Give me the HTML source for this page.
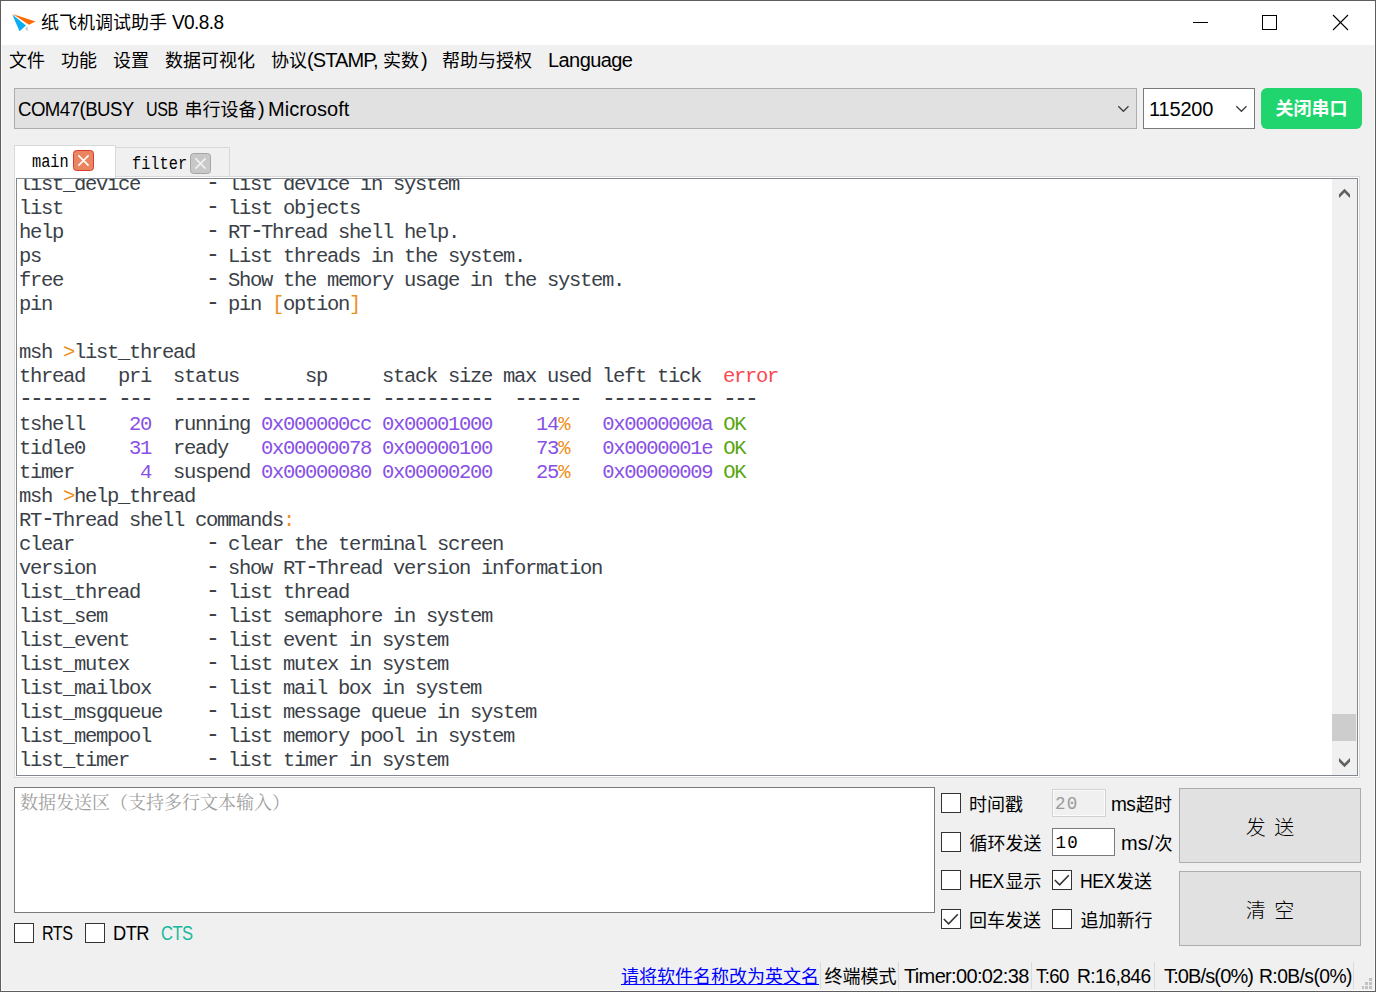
<!DOCTYPE html>
<html lang="zh-CN">
<head>
<meta charset="utf-8">
<title>纸飞机调试助手 V0.8.8</title>
<style>
html,body{margin:0;padding:0;}
body{width:1376px;height:992px;overflow:hidden;background:#f0f0f0;position:relative;
 font-family:"Liberation Sans","Noto Sans CJK SC",sans-serif;font-size:18px;color:#000;}
.abs{position:absolute;}
.t{position:absolute;white-space:pre;line-height:24px;height:24px;}
.c{font-size:18px;}
.l{font-size:20px;}
#frame{position:absolute;left:0;top:0;width:1374px;height:990px;border:1px solid #5e5e5e;pointer-events:none;z-index:50;}
#frame2{position:absolute;left:1px;top:45px;width:1372px;height:945px;border:1px solid #fbfbfb;border-top:none;pointer-events:none;z-index:49;}
#titlebar{position:absolute;left:1px;top:1px;width:1374px;height:44px;background:#fff;}
.combo{position:absolute;box-sizing:border-box;top:88px;height:41px;}
.cb{position:absolute;box-sizing:border-box;width:20px;height:20px;border:1px solid #333;background:#fff;}
.btn{position:absolute;box-sizing:border-box;background:#e1e1e1;border:1px solid #adadad;}
.sep{position:absolute;top:962px;width:1px;height:27px;background:#dadada;}
#term{position:absolute;left:16px;top:178px;width:1342px;height:598px;box-sizing:border-box;border:1px solid #828790;background:#fff;overflow:hidden;}
#term pre{position:absolute;left:2px;top:-6.5px;margin:0;font-family:"Liberation Mono",monospace;font-size:20.5px;letter-spacing:-1.302px;line-height:24px;color:#3b3f48;}
.d{font-size:23px;letter-spacing:-2.802px;position:relative;top:-1px;line-height:0;}
.o{color:#ee8f22;} .p{color:#8850e6;} .r{color:#f94a52;} .g{color:#58a512;}
.tab{font-family:"Liberation Mono",monospace;font-size:18px;transform:scaleX(0.85);transform-origin:0 0;}
.mono{font-family:"Liberation Mono",monospace;font-size:17.5px;letter-spacing:1.3px;}
.bt{font-family:"Liberation Sans","Noto Sans CJK SC",sans-serif;font-weight:300;font-size:20px;word-spacing:3px;}
</style>
</head>
<body>
<div id="titlebar"></div>
<!-- app icon -->
<svg class="abs" style="left:11px;top:13px" width="26" height="20" viewBox="0 0 26 20">
 <polygon points="1.7,1.1 24.5,8.6 17.9,11.7" fill="#ff6a00"/>
 <polygon points="1.3,1.4 15,12.5 8.5,18.2" fill="#0aaef0"/>
 <polygon points="16.6,13.2 16.9,18.4 14,15.6" fill="#c8c8c8"/>
</svg>
<div id="title"><span class="t c" id="title_c" style="left:41px;top:11px;">纸飞机调试助手</span><span class="t l" id="title_l" style="left:172px;top:10px;letter-spacing:-0.6px;transform:scaleX(0.951);transform-origin:0 0;">V0.8.8</span></div>
<!-- window controls -->
<svg class="abs" style="left:1180px;top:1px" width="194" height="44" viewBox="0 0 194 44" shape-rendering="crispEdges">
 <rect x="13" y="21" width="15" height="1" fill="#000"/>
 <rect x="82.5" y="14.5" width="14" height="14" fill="none" stroke="#000" stroke-width="1"/>
 <g shape-rendering="geometricPrecision" stroke="#000" stroke-width="1.1"><line x1="153" y1="14" x2="168" y2="29"/><line x1="168" y1="14" x2="153" y2="29"/></g>
</svg>
<!-- menu bar -->
<div id="menubar"><span class="t c" id="m1" style="left:9px;top:49px;">文件</span> <span class="t c" id="m2" style="left:61px;top:49px;">功能</span> <span class="t c" id="m3" style="left:113px;top:49px;">设置</span> <span class="t c" id="m4" style="left:165px;top:49px;">数据可视化</span> <span><span class="t c" id="m5a" style="left:271px;top:49px;">协议</span><span class="t l" id="m5b" style="left:307px;top:48px;letter-spacing:-0.91px;">(STAMP,</span> <span class="t c" id="m5c" style="left:383px;top:49px;">实数</span><span class="t l" id="m5d" style="left:421px;top:48px;">)</span></span> <span class="t c" id="m6" style="left:442px;top:49px;">帮助与授权</span> <span class="t l" id="m7" style="left:548px;top:48px;letter-spacing:-0.58px;">Language</span></div>
<!-- port combo -->
<div class="combo" style="left:14px;width:1123px;background:#e1e1e1;border:1px solid #adadad;"></div>
<div id="port"><span class="t l" id="p1" style="left:18px;top:97px;letter-spacing:-0.6px;transform:scaleX(0.933);transform-origin:0 0;">COM47(BUSY</span>  <span class="t l" id="p2" style="left:146px;top:97px;letter-spacing:-0.6px;transform:scaleX(0.805);transform-origin:0 0;">USB</span> <span class="t c" id="p3" style="left:184.5px;top:98px;">串行设备</span><span class="t l" id="p4" style="left:258px;top:97px;">)</span> <span class="t l" id="p5" style="left:268px;top:97px;letter-spacing:0.02px;">Microsoft</span></div>
<svg class="abs" style="left:1116px;top:104px" width="14" height="10" viewBox="0 0 14 10"><polyline points="2.3,2.2 7.4,7.3 12.5,2.2" fill="none" stroke="#3c3c3c" stroke-width="1.25"/></svg>
<!-- baud combo -->
<div class="combo" style="left:1143px;width:112px;background:#fff;border:1px solid #7a7a7a;"></div>
<span class="t l" id="baud" style="left:1149px;top:97px;letter-spacing:-0.16px;">115200</span>
<svg class="abs" style="left:1234px;top:104px" width="14" height="10" viewBox="0 0 14 10"><polyline points="2.3,2.2 7.4,7.3 12.5,2.2" fill="none" stroke="#3c3c3c" stroke-width="1.25"/></svg>
<!-- close port button -->
<div class="abs" style="left:1261px;top:88px;width:101px;height:41px;background:#20d56d;border-radius:6px;"></div>
<div class="t" id="closeport" style="left:1261px;top:97px;width:101px;text-align:center;color:#fff;font-weight:bold;">关闭串口</div>
<!-- tab pane frame -->
<div class="abs" style="left:14px;top:176px;width:1346px;height:602px;box-sizing:border-box;border:1px solid #d9d9d9;background:#fff;"></div>
<!-- tabs -->
<div class="abs" style="left:14px;top:145px;width:102px;height:34px;box-sizing:border-box;background:#fff;border:1px solid #d9d9d9;border-bottom:none;"></div>
<div class="abs" style="left:116px;top:147px;width:114px;height:30px;box-sizing:border-box;background:#f0f0f0;border:1px solid #d9d9d9;border-left:none;"></div>
<div class="abs" style="left:15px;top:146px;width:100px;height:32px;background:#fff;"></div>
<div class="t tab" id="tab1" style="left:31.5px;top:150px;">main</div>
<div class="abs" style="left:72.5px;top:150.3px;width:21px;height:21px;box-sizing:border-box;border:1.6px solid #dc3a2c;border-radius:3.5px;background:#e98560;"></div>
<svg class="abs" style="left:72.5px;top:150.3px" width="21" height="21" viewBox="0 0 21 21"><path d="M5.4 5.4 L15.6 15.6 M15.6 5.4 L5.4 15.6" stroke="#fff" stroke-width="1.5" fill="none"/></svg>
<div class="t tab" id="tab2" style="left:131.5px;top:152px;">filter</div>
<div class="abs" style="left:190.4px;top:152.5px;width:21px;height:21px;box-sizing:border-box;border:1.6px solid #a6a6a6;border-radius:3.5px;background:#c8c8c8;"></div>
<svg class="abs" style="left:190.4px;top:152.5px" width="21" height="21" viewBox="0 0 21 21"><path d="M5.4 5.4 L15.6 15.6 M15.6 5.4 L5.4 15.6" stroke="#f2f2f2" stroke-width="1.5" fill="none"/></svg>
<!-- terminal -->
<div id="term"><pre>list_device      <span class="d">-</span> list device in system
list             <span class="d">-</span> list objects
help             <span class="d">-</span> RT<span class="d">-</span>Thread shell help.
ps               <span class="d">-</span> List threads in the system.
free             <span class="d">-</span> Show the memory usage in the system.
pin              <span class="d">-</span> pin <span class="o">[</span>option<span class="o">]</span>

msh <span class="o">&gt;</span>list_thread
thread   pri  status      sp     stack size max used left tick  <span class="r">error</span>
<span class="d">-------- ---  ------- ---------- ----------  ------  ---------- ---</span>
tshell    <span class="p">20</span>  running <span class="p">0x000000cc</span> <span class="p">0x00001000</span>    <span class="p">14</span><span class="o">%</span>   <span class="p">0x0000000a</span> <span class="g">OK</span>
tidle0    <span class="p">31</span>  ready   <span class="p">0x00000078</span> <span class="p">0x00000100</span>    <span class="p">73</span><span class="o">%</span>   <span class="p">0x0000001e</span> <span class="g">OK</span>
timer      <span class="p">4</span>  suspend <span class="p">0x00000080</span> <span class="p">0x00000200</span>    <span class="p">25</span><span class="o">%</span>   <span class="p">0x00000009</span> <span class="g">OK</span>
msh <span class="o">&gt;</span>help_thread
RT<span class="d">-</span>Thread shell commands<span class="o">:</span>
clear            <span class="d">-</span> clear the terminal screen
version          <span class="d">-</span> show RT<span class="d">-</span>Thread version information
list_thread      <span class="d">-</span> list thread
list_sem         <span class="d">-</span> list semaphore in system
list_event       <span class="d">-</span> list event in system
list_mutex       <span class="d">-</span> list mutex in system
list_mailbox     <span class="d">-</span> list mail box in system
list_msgqueue    <span class="d">-</span> list message queue in system
list_mempool     <span class="d">-</span> list memory pool in system
list_timer       <span class="d">-</span> list timer in system</pre>
 <div class="abs" style="right:0;top:0;width:25px;height:596px;background:#f0f0f0;"></div>
 <div class="abs" style="right:1px;top:535px;width:24px;height:27px;background:#cdcdcd;"></div>
 <svg class="abs" style="left:1321px;top:9px" width="14" height="12" viewBox="0 0 14 12"><polygon points="6.5,0.8 12.1,6.4 11.9,10.1 6.5,4.6 1.1,10.1 0.9,6.4" fill="#606060"/></svg>
 <svg class="abs" style="left:1321px;top:577px" width="14" height="12" viewBox="0 0 14 12"><polygon points="6.5,11.2 12.1,5.6 11.9,1.9 6.5,7.4 1.1,1.9 0.9,5.6" fill="#606060"/></svg>
</div>
<!-- send area -->
<div class="abs" style="left:14px;top:787px;width:921px;height:126px;box-sizing:border-box;border:1px solid #7a7a7a;background:#fff;"></div>
<div class="t" id="ph" style="left:20px;top:791px;font-family:'Liberation Serif','Noto Serif CJK SC',serif;font-size:18px;color:#a0a0a0;">数据发送区（支持多行文本输入）</div>
<!-- RTS DTR CTS -->
<div class="cb" style="left:14px;top:923px;"></div><span class="t l" id="rts" style="left:42px;top:921px;letter-spacing:-0.6px;transform:scaleX(0.805);transform-origin:0 0;">RTS</span>
<div class="cb" style="left:85px;top:923px;"></div><span class="t l" id="dtr" style="left:113px;top:921px;letter-spacing:-0.6px;transform:scaleX(0.915);transform-origin:0 0;">DTR</span>
<span class="t l" id="cts" style="left:161px;top:921px;letter-spacing:-0.6px;transform:scaleX(0.829);transform-origin:0 0;color:#18b89c;">CTS</span>
<!-- options grid -->
<div class="cb" style="left:941px;top:793px;"></div><span class="t c" id="o1" style="left:969px;top:793px;">时间戳</span>
<div class="abs" style="left:1052px;top:789px;width:54px;height:28px;box-sizing:border-box;border:1px solid #d2d2d2;background:#f0f0f0;box-shadow:inset 0 0 0 1px #fbfbfb;"></div>
<div class="t mono" id="v1" style="left:1055px;top:792px;color:#9a9a9a;">20</div>
<span class="t l" id="u1a" style="left:1110.5px;top:792px;letter-spacing:-0.6px;transform:scaleX(0.953);transform-origin:0 0;">ms</span><span class="t c" id="u1b" style="left:1136px;top:793px;">超时</span>
<div class="cb" style="left:941px;top:832px;"></div><span class="t c" id="o2" style="left:969.5px;top:832px;">循环发送</span>
<div class="abs" style="left:1052px;top:828px;width:63px;height:28px;box-sizing:border-box;border:1px solid #7a7a7a;background:#fff;"></div>
<div class="t mono" id="v2" style="left:1055.5px;top:831px;">10</div>
<span class="t l" id="u2a" style="left:1121px;top:831px;letter-spacing:0.15px;">ms/</span><span class="t c" id="u2b" style="left:1154.5px;top:832px;">次</span>
<div class="cb" style="left:941px;top:870px;"></div><span class="t l" id="o3a" style="left:969px;top:869px;letter-spacing:-0.6px;transform:scaleX(0.885);transform-origin:0 0;">HEX</span><span class="t c" id="o3b" style="left:1005.5px;top:870px;">显示</span>
<div class="cb" style="left:1052px;top:870px;"></div>
<svg class="abs" style="left:1052px;top:870px" width="20" height="20" viewBox="0 0 20 20"><polyline points="2.8,10 7.6,14.8 16.8,5.3" fill="none" stroke="#333" stroke-width="1.6"/></svg>
<span class="t l" id="o4a" style="left:1080px;top:869px;letter-spacing:-0.6px;transform:scaleX(0.882);transform-origin:0 0;">HEX</span><span class="t c" id="o4b" style="left:1116px;top:870px;">发送</span>
<div class="cb" style="left:941px;top:909px;"></div>
<svg class="abs" style="left:941px;top:909px" width="20" height="20" viewBox="0 0 20 20"><polyline points="2.8,10 7.6,14.8 16.8,5.3" fill="none" stroke="#333" stroke-width="1.6"/></svg>
<span class="t c" id="o5" style="left:969px;top:909px;">回车发送</span>
<div class="cb" style="left:1052px;top:909px;"></div><span class="t c" id="o6" style="left:1080.5px;top:909px;">追加新行</span>
<!-- buttons -->
<div class="btn" style="left:1179px;top:788px;width:182px;height:75px;"></div>
<div class="t bt" id="b1" style="left:1179px;top:816px;width:182px;text-align:center;">发 送</div>
<div class="btn" style="left:1179px;top:871px;width:182px;height:75px;"></div>
<div class="t bt" id="b2" style="left:1179px;top:899px;width:182px;text-align:center;">清 空</div>
<!-- status bar -->
<span class="t c" id="s1" style="left:621px;top:965px;color:#0000ff;text-decoration:underline;text-underline-offset:1px;">请将软件名称改为英文名</span><div class="sep" style="left:820px;"></div>
<span class="t c" id="s2" style="left:824.5px;top:965px;">终端模式</span><div class="sep" style="left:898px;"></div>
<span class="t l" id="s3" style="left:904px;top:964px;letter-spacing:-0.65px;">Timer:00:02:38</span><div class="sep" style="left:1031px;"></div>
<span><span class="t l" id="s4a" style="left:1036px;top:964px;letter-spacing:-0.6px;transform:scaleX(0.926);transform-origin:0 0;">T:60</span> <span class="t l" id="s4b" style="left:1077px;top:964px;letter-spacing:-0.6px;transform:scaleX(0.964);transform-origin:0 0;">R:16,846</span></span><div class="sep" style="left:1154px;"></div>
<span><span class="t l" id="s5a" style="left:1164px;top:964px;letter-spacing:-0.87px;">T:0B/s(0%)</span> <span class="t l" id="s5b" style="left:1259px;top:964px;letter-spacing:-0.6px;transform:scaleX(0.965);transform-origin:0 0;">R:0B/s(0%)</span></span><div class="sep" style="left:1353px;"></div>
<svg class="abs" style="left:1360px;top:976px" width="14" height="14" viewBox="0 0 14 14" shape-rendering="crispEdges" fill="#c2c2c2">
 <rect x="9" y="2" width="3" height="3"/>
 <rect x="5" y="6" width="3" height="3"/><rect x="9" y="6" width="3" height="3"/>
 <rect x="2" y="10" width="2" height="3"/><rect x="5" y="10" width="3" height="3"/><rect x="9" y="10" width="3" height="3"/>
</svg>
<div id="frame2"></div><div id="frame"></div>
</body>
</html>
